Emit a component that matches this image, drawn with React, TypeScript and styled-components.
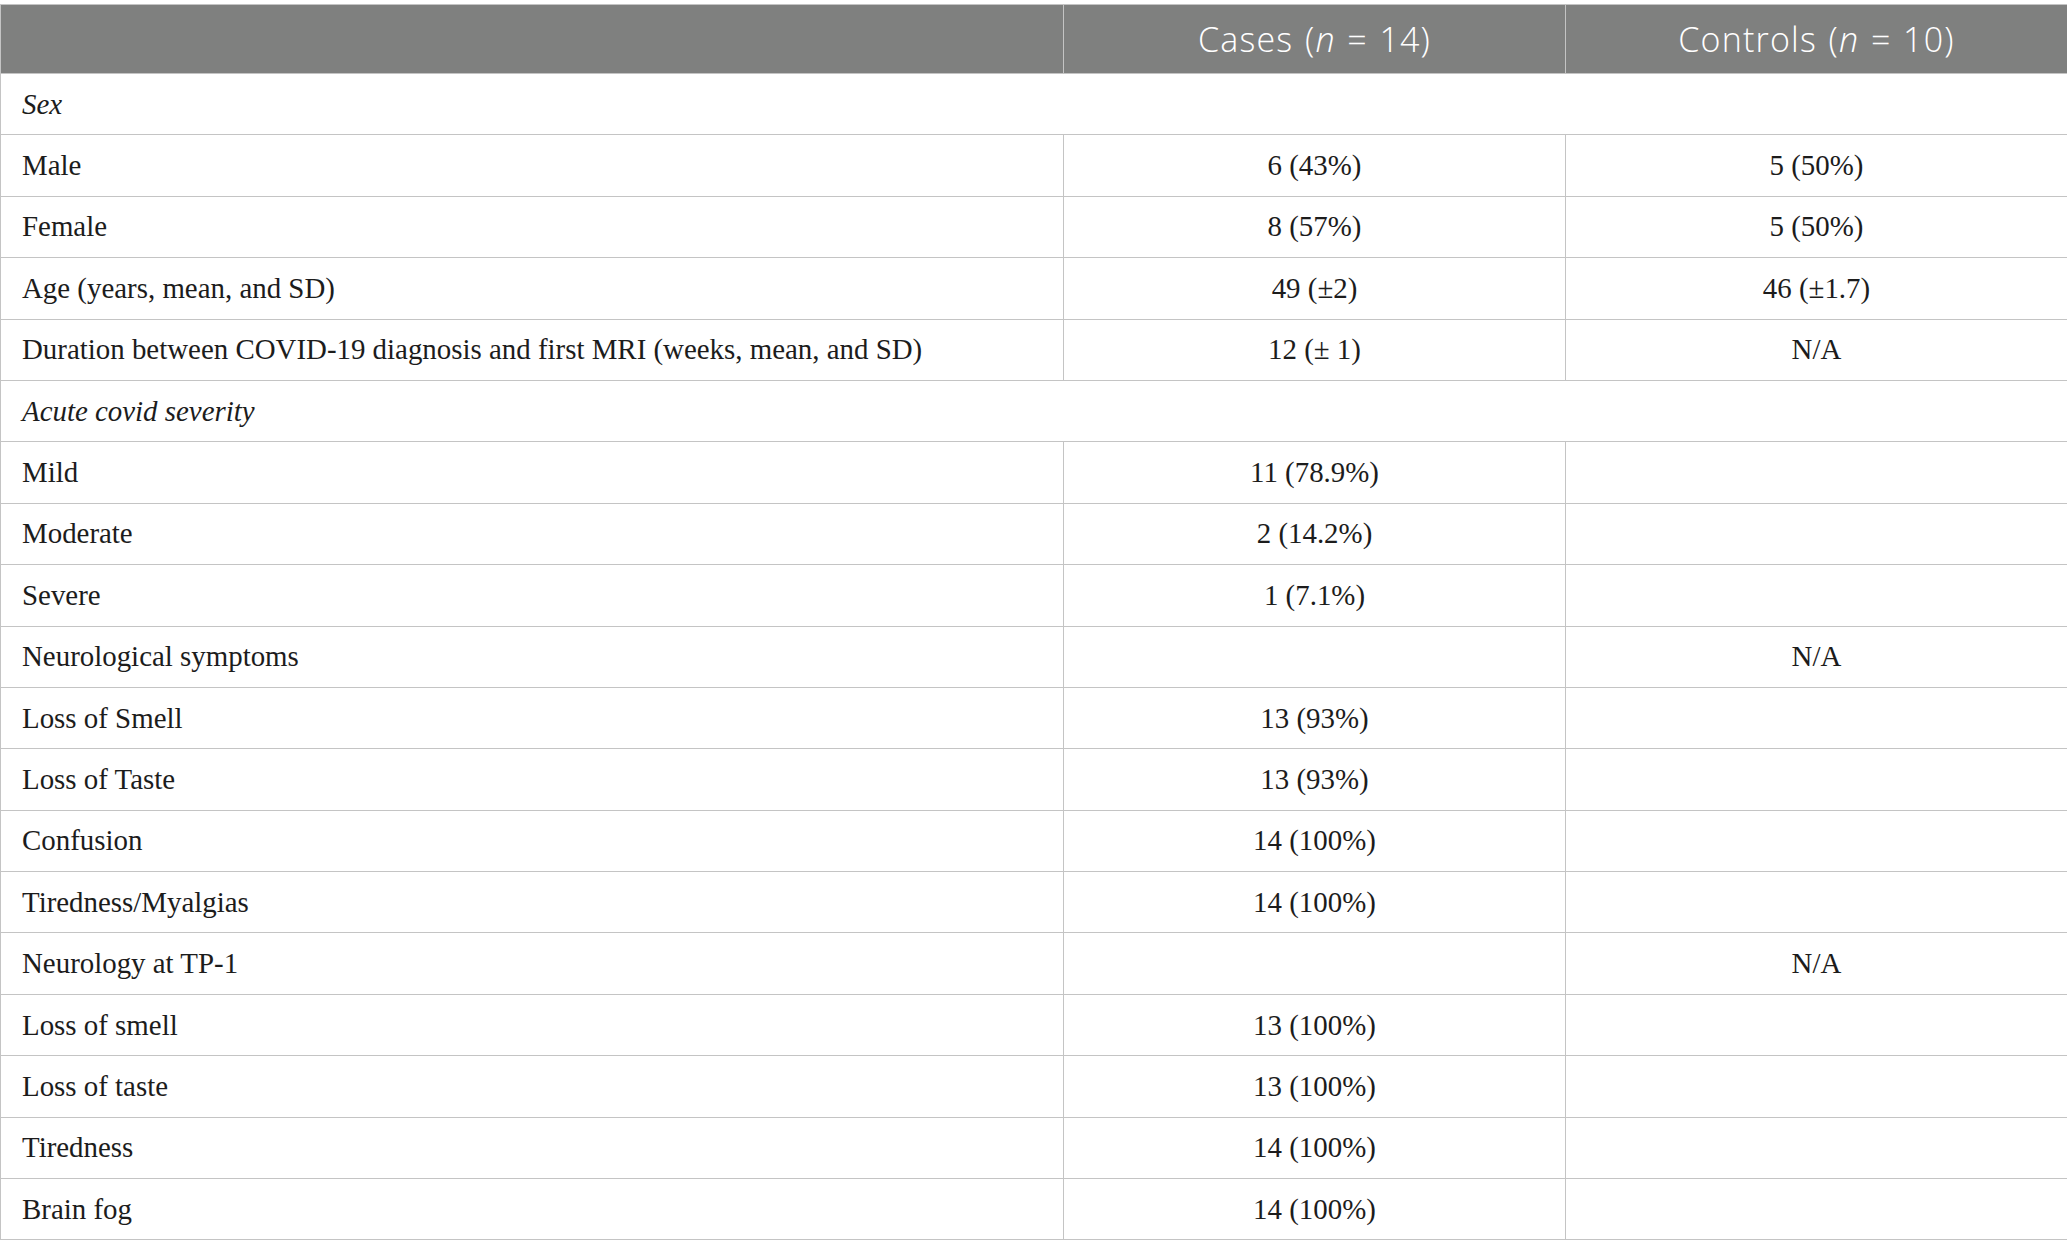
import React from "react";
import styled, { createGlobalStyle } from "styled-components";

const Global = createGlobalStyle`
  html, body { margin: 0; padding: 0; background: #ffffff; }
  body { font-family: "Liberation Serif", "Times New Roman", serif; }
`;

const Page = styled.div`
  padding-top: 4px;
  width: 2067px;
`;

const Table = styled.table`
  width: 2067px;
  border-collapse: collapse;
  table-layout: fixed;
`;

const HeadCell = styled.th`
  background: #7f807f;
  color: #ffffff;
  font-family: "Open Sans", "Noto Sans", sans-serif;
  font-weight: 300;
  font-size: 34px;
  height: 68px;
  padding: 0;
  text-align: center;
  border: 1.5px solid #c4c4c4;
  letter-spacing: 1.2px;
  word-spacing: 1.5px;
  em { font-style: italic; }
`;

const Cell = styled.td<{ $align?: "left" | "center"; $italic?: boolean }>`
  height: 60.4px;
  padding: 0 0 0 ${(p) => (p.$align === "center" ? "0" : "21px")};
  text-align: ${(p) => p.$align ?? "left"};
  font-style: ${(p) => (p.$italic ? "italic" : "normal")};
  font-size: 28.9px;
  color: #1c1c1c;
  border: 1.5px solid #c4c4c4;
  white-space: nowrap;
`;

type Row = { label: string; cases?: string; controls?: string; section?: boolean };

const rows: Row[] = [
  { label: "Sex", section: true },
  { label: "Male", cases: "6 (43%)", controls: "5 (50%)" },
  { label: "Female", cases: "8 (57%)", controls: "5 (50%)" },
  { label: "Age (years, mean, and SD)", cases: "49 (±2)", controls: "46 (±1.7)" },
  {
    label: "Duration between COVID-19 diagnosis and first MRI (weeks, mean, and SD)",
    cases: "12 (± 1)",
    controls: "N/A",
  },
  { label: "Acute covid severity", section: true },
  { label: "Mild", cases: "11 (78.9%)" },
  { label: "Moderate", cases: "2 (14.2%)" },
  { label: "Severe", cases: "1 (7.1%)" },
  { label: "Neurological symptoms", controls: "N/A" },
  { label: "Loss of Smell", cases: "13 (93%)" },
  { label: "Loss of Taste", cases: "13 (93%)" },
  { label: "Confusion", cases: "14 (100%)" },
  { label: "Tiredness/Myalgias", cases: "14 (100%)" },
  { label: "Neurology at TP-1", controls: "N/A" },
  { label: "Loss of smell", cases: "13 (100%)" },
  { label: "Loss of taste", cases: "13 (100%)" },
  { label: "Tiredness", cases: "14 (100%)" },
  { label: "Brain fog", cases: "14 (100%)" },
];

export default function App() {
  return (
    <Page>
      <Global />
      <Table>
        <colgroup>
          <col style={{ width: 1063 }} />
          <col style={{ width: 502 }} />
          <col style={{ width: 502 }} />
        </colgroup>
        <thead>
          <tr>
            <HeadCell />
            <HeadCell>
              Cases (<em>n</em> = 14)
            </HeadCell>
            <HeadCell>
              Controls (<em>n</em> = 10)
            </HeadCell>
          </tr>
        </thead>
        <tbody>
          {rows.map((r) =>
            r.section ? (
              <tr key={r.label}>
                <Cell colSpan={3} $italic>
                  {r.label}
                </Cell>
              </tr>
            ) : (
              <tr key={r.label}>
                <Cell>{r.label}</Cell>
                <Cell $align="center">{r.cases ?? ""}</Cell>
                <Cell $align="center">{r.controls ?? ""}</Cell>
              </tr>
            )
          )}
        </tbody>
      </Table>
    </Page>
  );
}
